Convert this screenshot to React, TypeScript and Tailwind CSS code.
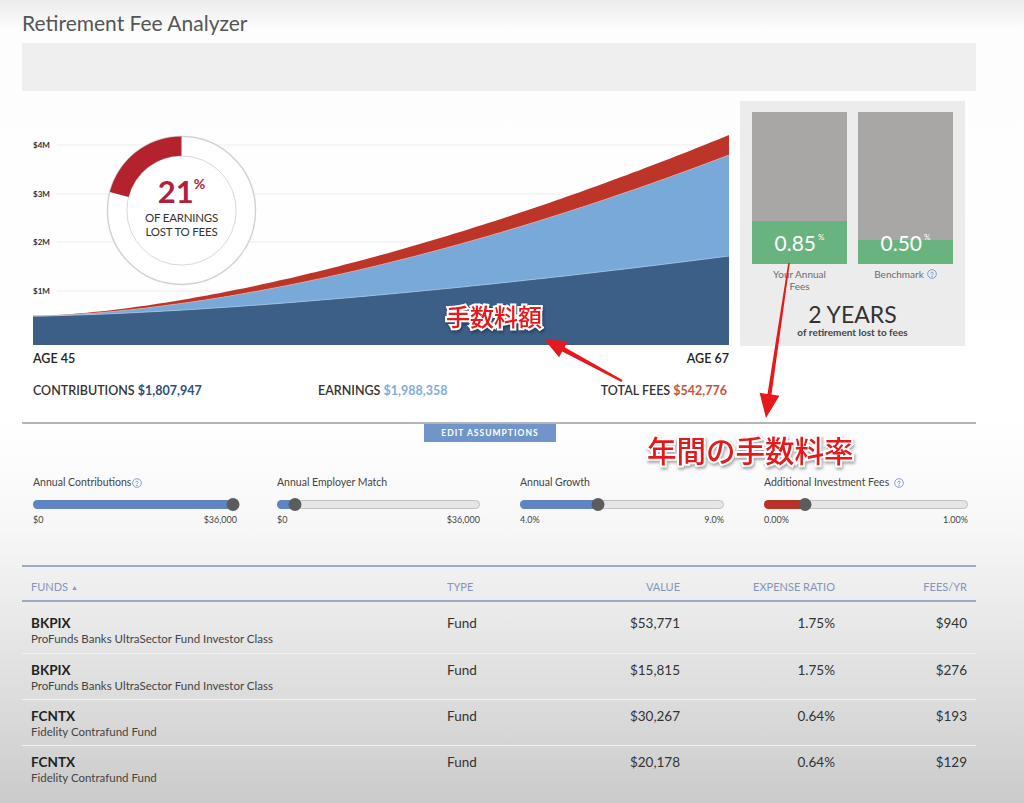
import React from "react";

const W = 696;
const H = 215;

function curve(y0: number, rise: number, p: number) {
  return (x: number) => y0 - rise * Math.pow(x / W, p);
}

const dark = curve(186, 60, 1.5);
const light = curve(186, 161, 1.65);
const red = curve(186, 181, 1.57);

function band(top: (x: number) => number, bottom: (x: number) => number) {
  const xs: number[] = [];
  for (let x = 0; x <= W; x += 6) xs.push(x);
  if (xs[xs.length - 1] !== W) xs.push(W);
  const up = xs.map((x) => `${x},${top(x).toFixed(1)}`).join(" L");
  const down = [...xs].reverse().map((x) => `${x},${bottom(x).toFixed(1)}`).join(" L");
  return `M${up} L${down} Z`;
}

function line(fn: (x: number) => number) {
  const pts: string[] = [];
  for (let x = 0; x <= W; x += 6) pts.push(`${x},${fn(x).toFixed(1)}`);
  pts.push(`${W},${fn(W).toFixed(1)}`);
  return `M${pts.join(" L")}`;
}

function Help({ className = "" }: { className?: string }) {
  return (
    <svg viewBox="0 0 12 12" className={`w-[10px] h-[10px] ${className}`} fill="none" stroke="#6f8fc8" strokeWidth="1">
      <circle cx="6" cy="6" r="5.2" />
      <path d="M4.6 4.7a1.45 1.45 0 0 1 2.8.4c0 1-1.4 1.2-1.4 2" strokeLinecap="round" />
      <circle cx="6" cy="8.8" r="0.35" fill="#6f8fc8" />
    </svg>
  );
}

const sliders = [
  { label: "Annual Contributions", help: "tight", min: "$0", max: "$36,000", pos: 0.98, fill: "bg-[#5f86c2]" },
  { label: "Annual Employer Match", help: "", min: "$0", max: "$36,000", pos: 0.09, fill: "bg-[#5f86c2]" },
  { label: "Annual Growth", help: "", min: "4.0%", max: "9.0%", pos: 0.38, fill: "bg-[#5f86c2]" },
  { label: "Additional Investment Fees", help: "space", min: "0.00%", max: "1.00%", pos: 0.2, fill: "bg-[#b8322a]" },
];

const funds = [
  { sym: "BKPIX", name: "ProFunds Banks UltraSector Fund Investor Class", value: "$53,771", ratio: "1.75%", fees: "$940" },
  { sym: "BKPIX", name: "ProFunds Banks UltraSector Fund Investor Class", value: "$15,815", ratio: "1.75%", fees: "$276" },
  { sym: "FCNTX", name: "Fidelity Contrafund Fund", value: "$30,267", ratio: "0.64%", fees: "$193" },
  { sym: "FCNTX", name: "Fidelity Contrafund Fund", value: "$20,178", ratio: "0.64%", fees: "$129" },
];

const annot =
  "font-['Noto_Sans_CJK_JP',sans-serif] font-medium text-[#e5191b] [-webkit-text-stroke:4px_#fff] [paint-order:stroke_fill] [filter:drop-shadow(1px_2px_1.5px_rgba(0,0,0,0.35))] leading-none whitespace-nowrap";

export default function App() {
  return (
    <div className="relative w-[1024px] h-[803px] overflow-hidden font-['Lato','Open_Sans',sans-serif] bg-[linear-gradient(to_bottom,#ececec_0px,#fdfdfd_30px,#ffffff_420px,#f7f7f7_530px,#e9e9e9_620px,#cbcbcb_803px)]">
      <div className="h-[43px] px-[22px] pt-[9px] text-[21px] leading-[28px] text-[#555]">Retirement Fee Analyzer</div>
      <div className="ml-[22px] w-[954px] h-[48px] bg-[#efefef]" />

      <div className="flex h-[331px]">
        <div className="ml-[33px] w-[696px]">
          <div className="relative mt-[39px] h-[215px]">
            <svg width={W} height={H} className="block">
              {[15, 64, 112, 161].map((y) => (
                <line key={y} x1={24} x2={W} y1={y} y2={y} stroke="#ededed" strokeWidth="1" />
              ))}
              {[
                ["$4M", 15],
                ["$3M", 64],
                ["$2M", 112],
                ["$1M", 161],
              ].map(([t, y]) => (
                <text key={t as string} x={0} y={(y as number) + 3} fontSize="8" fontWeight="700" fill="#333" fontFamily="Lato, sans-serif">
                  {t}
                </text>
              ))}
              <path d={band(red, light)} fill="#bd3428" />
              <path d={band(light, dark)} fill="#78a9d9" />
              <path d={band(dark, () => H)} fill="#3c5f87" />
              <path d={line(light)} fill="none" stroke="#d9a39c" strokeWidth="0.8" />
              <path d={line(dark)} fill="none" stroke="#a9c6e3" strokeWidth="0.8" />
            </svg>

            <div className="absolute left-[73px] top-[5px] w-[151px] h-[151px]">
              <svg viewBox="0 0 152 152" className="absolute inset-0 w-full h-full">
                <circle cx="76" cy="76" r="74.5" fill="#fff" stroke="#d2d2d2" strokeWidth="1.5" />
                <circle cx="76" cy="76" r="55" fill="#fff" stroke="#d8d8d8" strokeWidth="1" />
                <path
                  d="M76 1.5 A74.5 74.5 0 0 0 3.8 57.5 L22.7 62.3 A55 55 0 0 1 76 21 Z"
                  fill="#b3222d"
                />
              </svg>
              <div className="absolute inset-0 flex flex-col items-center pt-[41px]">
                <div className="flex items-start text-[#b01f3c] font-bold">
                  <span className="text-[31px] leading-[30px]">21</span>
                  <span className="text-[14px] leading-[14px] mt-[1px]">%</span>
                </div>
                <div className="mt-[5px] text-[11.5px] leading-[14px] text-[#333] text-center tracking-[-0.02em]">
                  OF EARNINGS
                  <br />
                  LOST TO FEES
                </div>
              </div>
            </div>
          </div>

          <div className="flex justify-between mt-[6px] text-[12.5px] leading-[16px] font-semibold text-[#222]">
            <span>AGE 45</span>
            <span>AGE 67</span>
          </div>

          <div className="flex mt-[16px] text-[12.5px] leading-[16px] font-semibold text-[#333]">
            <span className="w-[285px]">
              CONTRIBUTIONS <span className="font-bold text-[#2e4f78]">$1,807,947</span>
            </span>
            <span>
              EARNINGS <span className="font-bold text-[#7eaddb]">$1,988,358</span>
            </span>
            <span className="ml-auto pr-[2px]">
              TOTAL FEES <span className="font-bold text-[#c4553d]">$542,776</span>
            </span>
          </div>
        </div>

        <div className="ml-[11px] mt-[10px] w-[225px] h-[245px] bg-[#ececec] px-[12px] pt-[11px]">
          <div className="flex gap-[11px]">
            {[
              { v: "0.85", g: "h-[43px]" },
              { v: "0.50", g: "h-[24px]" },
            ].map((b) => (
              <div key={b.v} className="relative w-[95px] h-[152px] flex flex-col bg-[#a9a6a6]">
                <div className="flex-1" />
                <div className={`${b.g} bg-[#69b37e]`} />
                <div className="absolute left-0 right-0 bottom-0 h-[43px] flex items-center justify-center text-white">
                  <span className="text-[21px] leading-[24px]">{b.v}</span>
                  <span className="text-[8px] leading-[8px] self-start mt-[12px] ml-[2px]">%</span>
                </div>
              </div>
            ))}
          </div>
          <div className="flex gap-[11px] mt-[4px] text-[10px] leading-[12px] text-[#6b6b6b]">
            <div className="w-[95px] text-center">
              Your Annual
              <br />
              Fees
            </div>
            <div className="w-[95px] flex justify-center items-start gap-[3px]">
              <span>Benchmark</span>
              <Help className="mt-[1px]" />
            </div>
          </div>
          <div className="mt-[10px] text-center text-[23px] leading-[24px] text-[#333]">2 YEARS</div>
          <div className="text-center text-[10px] leading-[12px] font-bold text-[#444]">of retirement lost to fees</div>
        </div>
      </div>

      <div className="ml-[22px] w-[954px] border-t-2 border-[#b5b5b5]" />
      <div className="ml-[424px] w-[132px] h-[18px] bg-[#7195cb] text-white text-[8.5px] font-bold tracking-[0.12em] flex items-center justify-center">
        EDIT ASSUMPTIONS
      </div>

      <div className="ml-[33px] mt-[34px] grid grid-cols-[204px_203px_204px_204px] gap-x-[40px]">
        {sliders.map((s) => (
          <div key={s.label}>
            <div className="flex items-center h-[14px] text-[10.5px] text-[#444]">
              <span>{s.label}</span>
              {s.help === "tight" && <Help className="ml-[1px]" />}
              {s.help === "space" && <Help className="ml-[5px]" />}
            </div>
            <div className="relative mt-[7px] h-[14px] flex items-center">
              <div className="w-full h-[9px] rounded-full bg-[#e6e6e6] border border-[#c2c2c2]" />
              <div className={`absolute left-0 h-[9px] rounded-full ${s.fill}`} style={{ width: `${s.pos * 100 + 2}%` }} />
              <div
                className="absolute w-[13px] h-[13px] rounded-full bg-[#5c5c5c] -translate-x-1/2"
                style={{ left: `${s.pos * 100}%` }}
              />
            </div>
            <div className="flex justify-between mt-[3px] text-[9px] leading-[12px] text-[#444]">
              <span>{s.min}</span>
              <span>{s.max}</span>
            </div>
          </div>
        ))}
      </div>

      <div className="ml-[22px] w-[954px] mt-[39px] border-t-2 border-[#9ea9c2]">
        <div className="grid grid-cols-[416px_120px_113px_155px_132px] px-[9px] h-[35px] pt-[7px] items-center border-b-2 border-[#9ea9c2] text-[11px] text-[#8395bb]">
          <span className="flex items-center gap-[3px]">
            FUNDS <span className="text-[7px]">▲</span>
          </span>
          <span>TYPE</span>
          <span className="text-right">VALUE</span>
          <span className="text-right">EXPENSE RATIO</span>
          <span className="text-right">FEES/YR</span>
        </div>
        <div className="pt-[5px]">
          {funds.map((f, i) => (
            <div
              key={i}
              className={`grid grid-cols-[416px_120px_113px_155px_132px] px-[9px] h-[46px] pt-[8px] ${i > 0 ? "border-t border-[#f2f2f2]" : ""}`}
            >
              <div>
                <div className="text-[13.5px] leading-[16px] font-bold text-[#222]">{f.sym}</div>
                <div className="mt-[1px] text-[11.5px] leading-[14px] text-[#444]">{f.name}</div>
              </div>
              <div className="text-[13.5px] leading-[16px] text-[#333]">Fund</div>
              <div className="text-right text-[13.5px] leading-[16px] text-[#333]">{f.value}</div>
              <div className="text-right text-[13.5px] leading-[16px] text-[#333]">{f.ratio}</div>
              <div className="text-right text-[13.5px] leading-[16px] text-[#333]">{f.fees}</div>
            </div>
          ))}
        </div>
      </div>

      {/* annotations laid over the screenshot */}
      <svg className="absolute inset-0 pointer-events-none" width="1024" height="803">
        <polygon
          points="622.5,380.1 564.6,347.2 567.7,341.5 544,339 559.1,357.3 562.2,351.6 621.5,381.9"
          fill="#e5191b"
        />
        <polygon
          points="789.8,263.1 771.5,394.6 779.4,395.8 766,418 759.6,392.8 767.5,394 788.2,262.9"
          fill="#e5191b"
        />
      </svg>
      <div className={`absolute left-[446px] top-[304px] text-[24px] ${annot}`}>手数料額</div>
      <div className={`absolute left-[647px] top-[435px] text-[29.5px] ${annot}`}>年間の手数料率</div>
    </div>
  );
}
